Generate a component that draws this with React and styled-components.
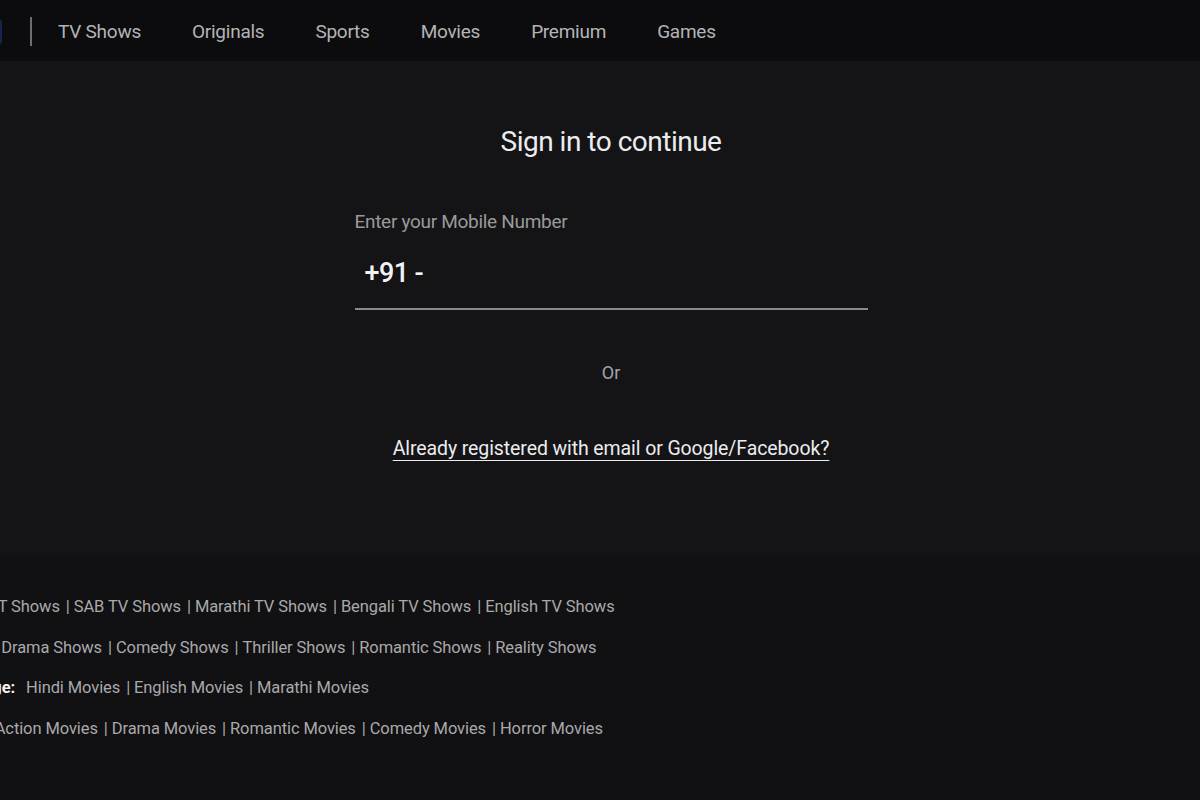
import styled, { createGlobalStyle } from "styled-components";

const GlobalStyle = createGlobalStyle`
  * {
    box-sizing: border-box;
  }
  html, body {
    margin: 0;
    padding: 0;
    background: #141316;
  }
  body {
    font-family: Roboto, "Liberation Sans", Arial, sans-serif;
    overflow: hidden;
  }
`;

const Page = styled.div`
  width: 1200px;
  height: 800px;
  display: flex;
  flex-direction: column;
  overflow: hidden;
  background: #141316;
`;

const Header = styled.header`
  height: 61px;
  flex: 0 0 auto;
  display: flex;
  align-items: center;
  background: #0c0c0e;
  padding-top: 2px;
`;

const Logo = styled.div`
  width: 40px;
  height: 26px;
  margin-left: -38px;
  border-radius: 4px;
  background: #15264a;
`;

const Divider = styled.div`
  width: 2px;
  height: 29px;
  margin-left: 28px;
  background: #6e6e70;
`;

const Nav = styled.nav`
  display: flex;
  align-items: center;
  gap: 51px;
  margin-left: 26px;
`;

const NavLink = styled.a`
  color: #b4b4b6;
  font-size: 19px;
  letter-spacing: -0.25px;
  text-decoration: none;
  cursor: pointer;
`;

const Main = styled.main`
  height: 494px;
  flex: 0 0 auto;
  display: flex;
  flex-direction: column;
  align-items: center;
  padding-left: 22px;
  padding-top: 63px;
`;

const Title = styled.h1`
  margin: 0;
  color: #ececee;
  font-size: 28px;
  font-weight: 400;
  letter-spacing: -0.5px;
  line-height: 36px;
`;

const Form = styled.form`
  width: 513px;
  margin-top: 50px;
  display: flex;
  flex-direction: column;
`;

const Label = styled.label`
  color: #9a9a9c;
  font-size: 19px;
  letter-spacing: -0.3px;
  line-height: 24px;
`;

const PhoneRow = styled.div`
  display: flex;
  align-items: center;
  height: 66px;
  margin-top: 10px;
  padding-left: 10px;
  border-bottom: 2px solid #8a8a8c;
`;

const Prefix = styled.span`
  color: #f2f2f4;
  font-size: 27px;
  font-weight: 500;
  letter-spacing: -0.6px;
  margin-right: 8px;
  margin-bottom: 6px;
`;

const PhoneInput = styled.input`
  flex: 1;
  min-width: 0;
  border: none;
  outline: none;
  background: transparent;
  color: #f2f2f4;
  font-size: 26px;
  font-family: inherit;
`;

const OrText = styled.p`
  margin: 52px 0 0;
  color: #a4a4a6;
  font-size: 18px;
  line-height: 22px;
`;

const AltLink = styled.a`
  margin-top: 53px;
  color: #ececee;
  font-size: 19.5px;
  letter-spacing: -0.1px;
  line-height: 24px;
  text-decoration: underline;
  text-underline-offset: 5px;
  text-decoration-thickness: 1px;
  cursor: pointer;
`;

const Footer = styled.footer`
  flex: 1;
  background: #111012;
  padding-top: 41px;
  display: flex;
  flex-direction: column;
  gap: 18.7px;
  overflow: hidden;
`;

const Row = styled.div`
  display: flex;
  align-items: center;
  white-space: nowrap;
  margin-left: ${(p) => p.$offset}px;
  font-size: 16.5px;
  line-height: 22px;
  letter-spacing: -0.1px;
`;

const RowTitle = styled.span`
  color: #f2f2f4;
  font-weight: 700;
  margin-right: 11px;
`;

const FooterLink = styled.a`
  color: #a9a9ab;
  text-decoration: none;
  cursor: pointer;
`;

const Sep = styled.span`
  color: #a9a9ab;
  margin: 0 4px 0 6px;
`;

const navItems = ["TV Shows", "Originals", "Sports", "Movies", "Premium", "Games"];

const footerRows = [
  {
    title: "TV Shows by Channel:",
    offset: -196,
    items: ["SET Shows", "SAB TV Shows", "Marathi TV Shows", "Bengali TV Shows", "English TV Shows"],
  },
  {
    title: "TV Shows by Genre:",
    offset: -157,
    items: ["Drama Shows", "Comedy Shows", "Thriller Shows", "Romantic Shows", "Reality Shows"],
  },
  {
    title: "Movies by Language:",
    offset: -140,
    items: ["Hindi Movies", "English Movies", "Marathi Movies"],
  },
  {
    title: "Movies by Genre:",
    offset: -143,
    items: ["Action Movies", "Drama Movies", "Romantic Movies", "Comedy Movies", "Horror Movies"],
  },
];

function FooterRow({ title, items, offset }) {
  return (
    <Row $offset={offset}>
      <RowTitle>{title}</RowTitle>
      {items.map((item, i) => (
        <span key={item}>
          {i > 0 && <Sep>|</Sep>}
          <FooterLink>{item}</FooterLink>
        </span>
      ))}
    </Row>
  );
}

export default function App() {
  return (
    <Page>
      <GlobalStyle />
      <Header>
        <Logo />
        <Divider />
        <Nav>
          {navItems.map((item) => (
            <NavLink key={item}>{item}</NavLink>
          ))}
        </Nav>
      </Header>
      <Main>
        <Title>Sign in to continue</Title>
        <Form>
          <Label htmlFor="mobile">Enter your Mobile Number</Label>
          <PhoneRow>
            <Prefix>+91 -</Prefix>
            <PhoneInput id="mobile" type="tel" />
          </PhoneRow>
        </Form>
        <OrText>Or</OrText>
        <AltLink>Already registered with email or Google/Facebook?</AltLink>
      </Main>
      <Footer>
        {footerRows.map((row) => (
          <FooterRow key={row.title} {...row} />
        ))}
      </Footer>
    </Page>
  );
}
